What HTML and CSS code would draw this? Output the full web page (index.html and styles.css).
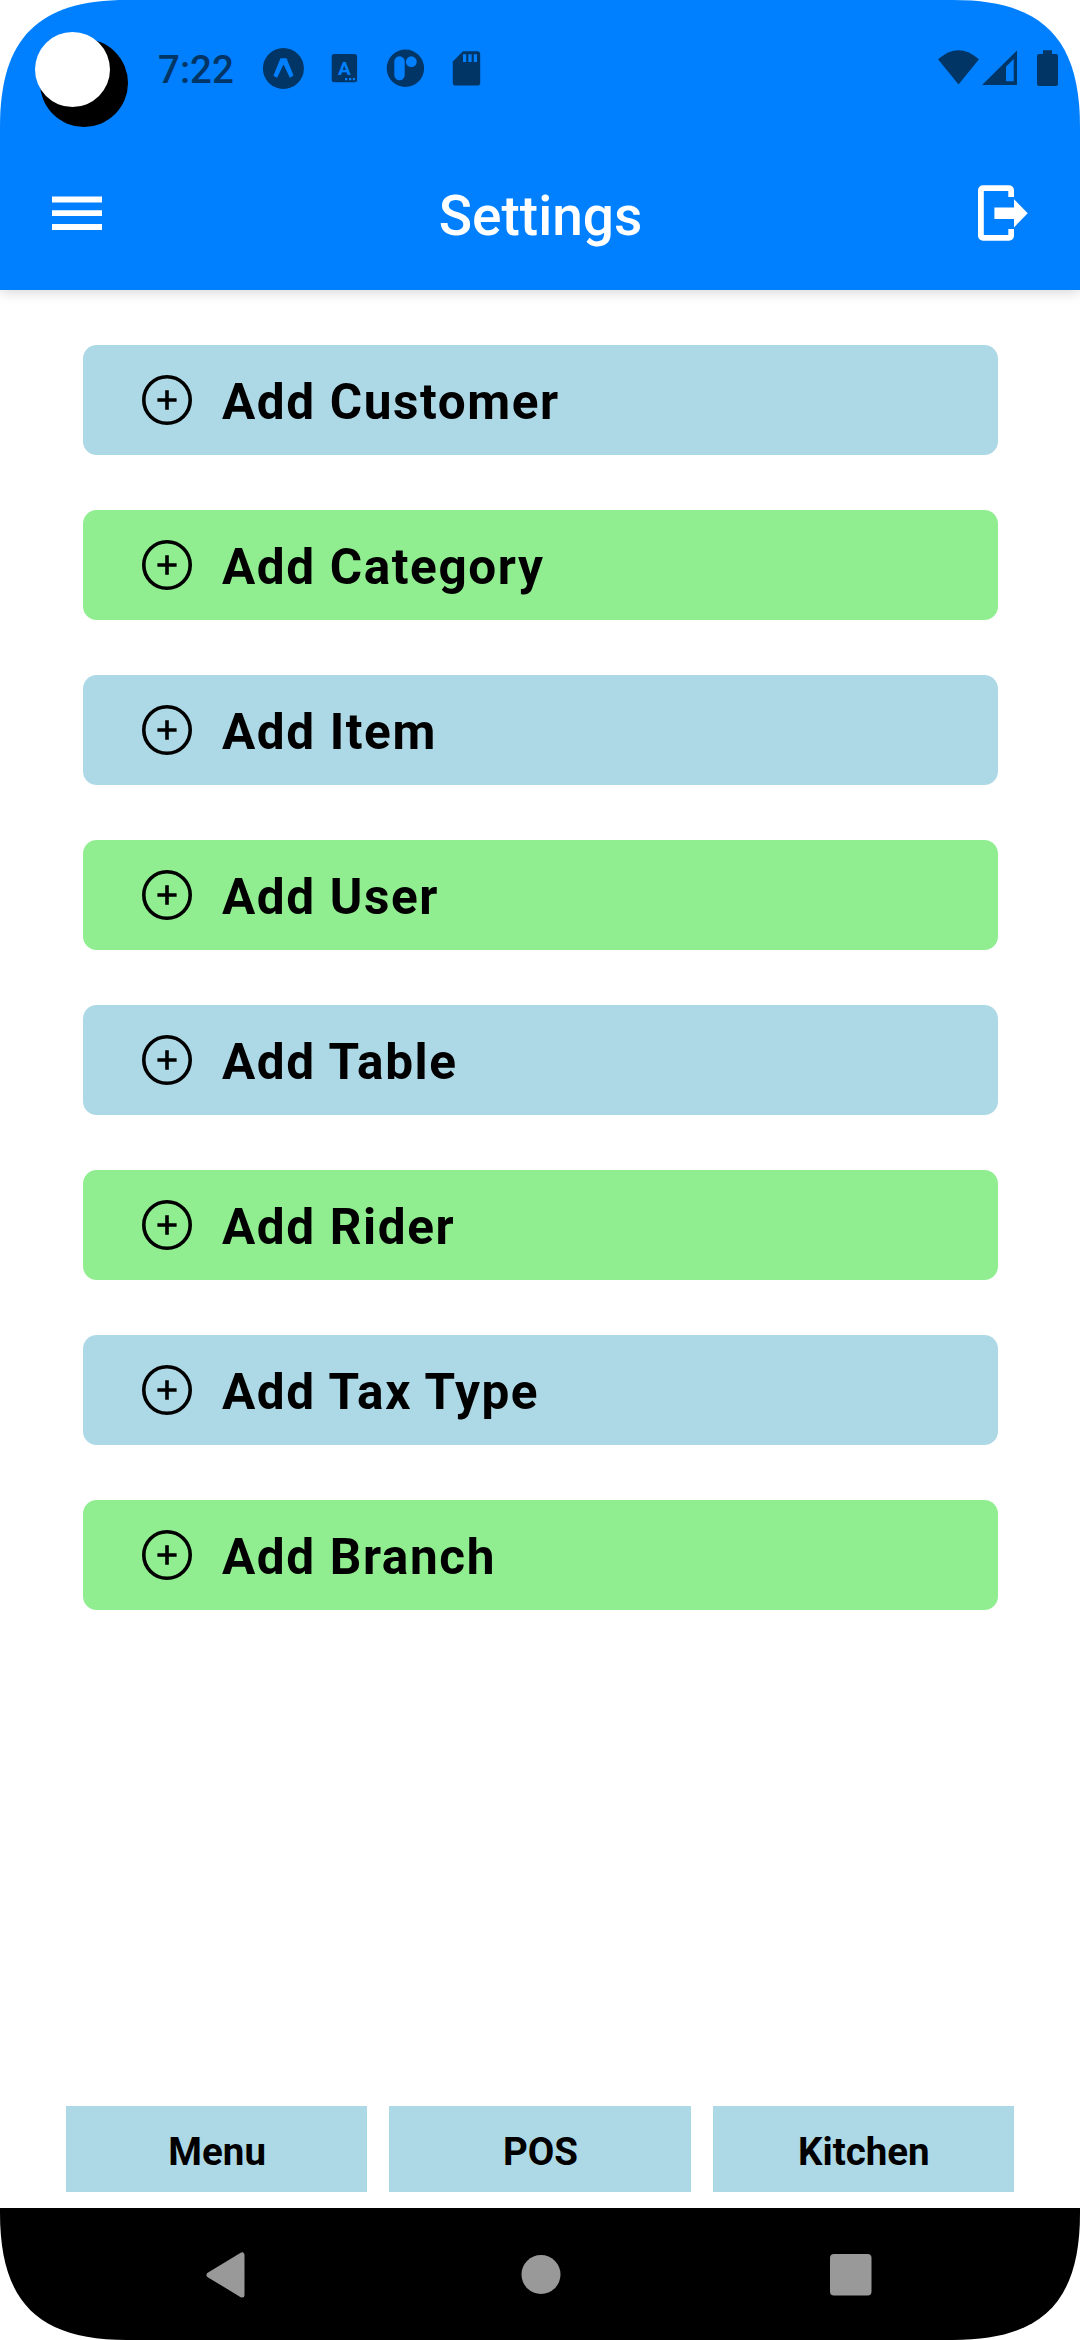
FILE: index.html
```html
<!DOCTYPE html>
<html lang="en">
<head>
<meta charset="utf-8">
<title>Settings</title>
<link rel="stylesheet" href="styles.css">
</head>
<body>
<div class="screen">
  <div class="camera"></div>
  <header class="top">
    <div class="status">
      <span class="clock">7:22</span>
      <svg class="status-left" viewBox="252 40 240 60" width="240" height="60">
        <circle cx="283.4" cy="68.4" r="20.5"/>
        <path class="cut" d="M280.5 58.3h6l7 17.2-3.6 2.3-6.4-13.3-6.4 13.3-3.7-2.1z"/>
        <rect x="331.7" y="54" width="25.4" height="28.3" rx="2.5"/>
        <path class="cut" d="M345 78h2.3v2.3H345zM349 78h2.3v2.3H349zM352.8 78h2.3v2.3h-2.3z"/>
        <text class="cut badge-letter" x="344.3" y="75" text-anchor="middle">A</text>
        <circle cx="405.4" cy="68.3" r="18.7"/>
        <rect class="cut" x="394.3" y="56.3" width="10.4" height="24" rx="5.2"/>
        <circle class="cut" cx="411.3" cy="61.7" r="5.4"/>
        <path d="M463 51.2h14a3.2 3.2 0 0 1 3.2 3.2v28a3.2 3.2 0 0 1-3.2 3.2h-21a3.2 3.2 0 0 1-3.2-3.2V61.5z"/>
        <path class="cut" d="M463 54.3h3.2V62H463zM468.4 54.3h3.2V62h-3.2zM473.8 54.3h3.2V62h-3.2z"/>
      </svg>
      <svg class="status-right" viewBox="938 40 122 60" width="122" height="60">
        <path d="M938 59.3Q958.500 41 979 59.3L958.500 84.400z"/>
        <path fill-rule="evenodd" d="M982 85L1017 50.500V85zM1006 66.700V81.200H1013.700V59z"/>
        <path d="M1043 50.200h9V54h4a2 2 0 0 1 2 2v28a2 2 0 0 1-2 2h-17a2 2 0 0 1-2-2V56a2 2 0 0 1 2-2h4z"/>
      </svg>
    </div>
    <div class="appbar">
      <svg class="icon" viewBox="52 183 50 60" width="50" height="60">
        <path d="M52 196.400h50v6.200H52zM52 210.200h50v5.800H52zM52 224.100h50v5.800H52z"/>
      </svg>
      <h1 class="title">Settings</h1>
      <svg class="icon" viewBox="978 183 50 60" width="50" height="60">
        <path d="M983 185.300h26a5 5 0 0 1 5 5v6.700h-5.700v-6h-24.500v44h24.500v-6h5.700v6.700a5 5 0 0 1-5 5h-26a5 5 0 0 1-5-5v-45.400a5 5 0 0 1 5-5z"/>
        <path d="M994.400 207.400H1014v-8.200l13.700 14.100-13.700 14.100V219h-19.600z"/>
      </svg>
    </div>
  </header>

  <svg class="defs" width="0" height="0">
    <symbol id="plus" viewBox="0 0 50 50">
      <circle cx="25" cy="25" r="23.200"/>
      <path d="M25 15.200v19.600M15.400 25h19.200"/>
    </symbol>
  </svg>

  <main class="list">
    <button class="row blue"><svg class="plus"><use href="#plus"/></svg><span>Add Customer</span></button>
    <button class="row green"><svg class="plus"><use href="#plus"/></svg><span>Add Category</span></button>
    <button class="row blue"><svg class="plus"><use href="#plus"/></svg><span>Add Item</span></button>
    <button class="row green"><svg class="plus"><use href="#plus"/></svg><span>Add User</span></button>
    <button class="row blue"><svg class="plus"><use href="#plus"/></svg><span>Add Table</span></button>
    <button class="row green"><svg class="plus"><use href="#plus"/></svg><span>Add Rider</span></button>
    <button class="row blue"><svg class="plus"><use href="#plus"/></svg><span>Add Tax Type</span></button>
    <button class="row green"><svg class="plus"><use href="#plus"/></svg><span>Add Branch</span></button>
  </main>

  <footer class="tabs">
    <button class="tab">Menu</button>
    <button class="tab">POS</button>
    <button class="tab">Kitchen</button>
  </footer>

  <nav class="navbar">
    <svg width="42" height="50" viewBox="0 0 42 50"><path class="back" d="M4 25L37 5v40z"/></svg>
    <svg width="40" height="50" viewBox="0 0 40 50"><circle cx="22" cy="24.500" r="19.500"/></svg>
    <svg width="42" height="50" viewBox="0 0 42 50"><rect x="0" y="4" width="41.500" height="41.500" rx="4"/></svg>
  </nav>
</div>
</body>
</html>
```

FILE: styles.css
```css
* {
  box-sizing: border-box;
}

body {
  margin: 0;
  background: #fff;
  font-family: Roboto, "Liberation Sans", sans-serif;
}

button {
  border: 0;
  margin: 0;
  font: inherit;
  color: #000;
}

svg {
  display: block;
  flex: none;
}

.screen {
  position: relative;
  display: flex;
  flex-direction: column;
  width: 1080px;
  height: 2340px;
  background: #fff;
  clip-path: path("M0 127C0 38 38 0 127 0H953C1042 0 1080 38 1080 127V2213C1080 2302 1042 2340 953 2340H127C38 2340 0 2302 0 2213Z");
}

/* Camera cutout with the pointer dot over it */
.camera {
  position: absolute;
  left: 40px;
  top: 39px;
  width: 88px;
  height: 88px;
  border-radius: 50%;
  background: #000;
}

.camera::after {
  content: "";
  position: absolute;
  left: -5px;
  top: -7px;
  width: 75px;
  height: 75px;
  border-radius: 50%;
  background: #fff;
}

.top {
  height: 290px;
  background: #0080ff;
  box-shadow: 0 2px 12px rgba(0, 0, 0, 0.17);
}

.status {
  display: flex;
  align-items: center;
  height: 136px;
  padding: 4px 20px 0 158px;
  color: #003566;
  fill: #003566;
}

.clock {
  width: 94px;
  padding-bottom: 2px;
  font-size: 38.5px;
  font-weight: 500;
}

.status-right {
  margin-left: auto;
}

.cut {
  fill: #0080ff;
}

.badge-letter {
  font-size: 19px;
  font-weight: 700;
}

.appbar {
  display: flex;
  align-items: center;
  justify-content: space-between;
  height: 154px;
  padding: 0 52px;
}

.icon {
  fill: #fff;
}

.title {
  margin: 5px 0 0;
  padding-left: 1px;
  color: #fff;
  font-size: 55px;
  font-weight: 500;
}

.defs {
  position: absolute;
}

.list {
  flex: 1;
  display: flex;
  flex-direction: column;
  gap: 55px;
  padding: 55px 82px 0 83px;
}

.row {
  display: flex;
  align-items: center;
  gap: 30px;
  height: 110px;
  padding: 0 59px;
  border-radius: 13.75px;
  font-size: 49.5px;
  font-weight: 700;
  letter-spacing: 1.6px;
}

.row span {
  padding-top: 3px;
}

.blue {
  background: #add8e6;
}

.green {
  background: #90ee90;
}

.plus {
  width: 50px;
  height: 50px;
  fill: none;
  stroke: #000;
  stroke-width: 3.6;
}

.tabs {
  display: grid;
  grid-template-columns: repeat(3, 1fr);
  gap: 22px;
  padding: 0 66px 16px;
}

.tab {
  height: 86px;
  padding: 5px 0 0 1px;
  background: #add8e6;
  font-size: 38.5px;
  font-weight: 700;
}

.navbar {
  display: flex;
  align-items: center;
  justify-content: space-between;
  height: 132px;
  padding: 2px 208px 0 205px;
  background: #000;
  fill: #999;
}

.navbar svg {
  overflow: visible;
}

.back {
  stroke: #999;
  stroke-width: 5;
  stroke-linejoin: round;
}
```
